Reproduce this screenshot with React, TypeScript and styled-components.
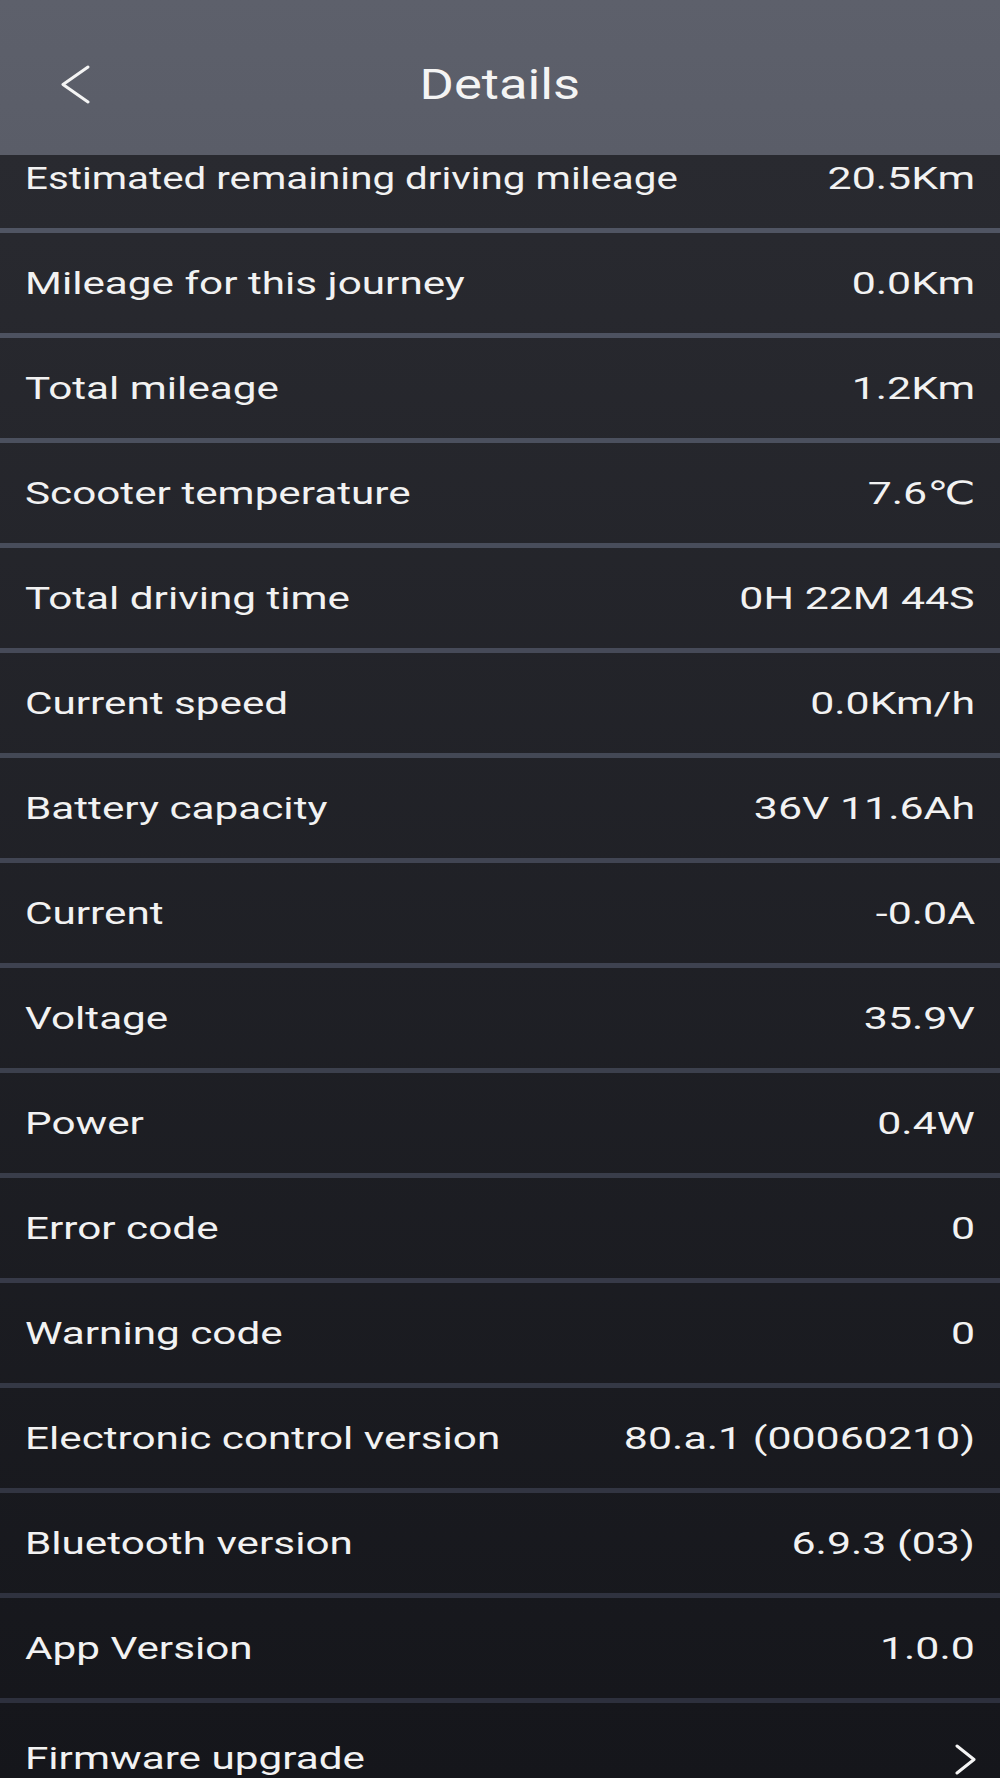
import React from 'react';
import styled, {createGlobalStyle} from 'styled-components';

const GlobalStyle = createGlobalStyle`
    html, body {
        margin: 0;
        padding: 0;
        background: #15161b;
    }
    body {
        font-family: Roboto, "DejaVu Sans", sans-serif;
        color: #f2f2f2;
    }
`;

interface DetailItem {
    label: string;
    value?: string;
    link?: boolean;
    /** long labels are squeezed a bit so they fit next to the value */
    tight?: boolean;
}

const items: DetailItem[] = [
    {label: 'Estimated remaining driving mileage', value: '20.5Km', tight: true},
    {label: 'Mileage for this journey', value: '0.0Km'},
    {label: 'Total mileage', value: '1.2Km'},
    {label: 'Scooter temperature', value: '7.6℃'},
    {label: 'Total driving time', value: '0H 22M 44S'},
    {label: 'Current speed', value: '0.0Km/h'},
    {label: 'Battery capacity', value: '36V 11.6Ah'},
    {label: 'Current', value: '-0.0A'},
    {label: 'Voltage', value: '35.9V'},
    {label: 'Power', value: '0.4W'},
    {label: 'Error code', value: '0'},
    {label: 'Warning code', value: '0'},
    {label: 'Electronic control version', value: '80.a.1 (00060210)'},
    {label: 'Bluetooth version', value: '6.9.3 (03)'},
    {label: 'App Version', value: '1.0.0'},
    {label: 'Firmware upgrade', link: true},
];

const Screen = styled.div`
    width: 1000px;
    height: 1778px;
    display: flex;
    flex-direction: column;
    overflow: hidden;
`;

const Header = styled.header`
    flex: 0 0 155px;
    box-sizing: border-box;
    padding-top: 14px;
    display: grid;
    grid-template-columns: 1fr auto 1fr;
    align-items: center;
    background: linear-gradient(#5d606b, #5a5d68);
    position: relative;
    z-index: 1;
`;

const BackButton = styled.button`
    justify-self: start;
    margin-left: 61px;
    padding: 0;
    border: 0;
    background: none;
    display: flex;
    cursor: pointer;
`;

const Title = styled.h1`
    margin: 0;
    font-size: 43px;
    font-weight: 400;
    line-height: 1;
    transform: scaleX(1.22);
    color: #f4f4f4;
`;

const Viewport = styled.main`
    flex: 1;
    overflow: hidden;
    background: linear-gradient(#292a30, #15161b);
`;

// the list is scrolled a little, so the first row sits partly under the header
const List = styled.ul`
    list-style: none;
    margin: -27px 0 0;
    padding: 0;
`;

const mix = (a: number[], b: number[], t: number) =>
    `rgb(${a.map((v, i) => Math.round(v + (b[i] - v) * t)).join(',')})`;

const Row = styled.li<{$t: number}>`
    height: 100px;
    box-sizing: content-box;
    border-bottom: 5px solid ${({$t}) => mix([80, 85, 99], [42, 45, 58], $t)};
    padding: 0 25px;
    display: flex;
    align-items: center;
    justify-content: space-between;

    &:last-child {
        padding-top: 5px;
    }
`;

const Label = styled.span<{$tight?: boolean}>`
    display: inline-block;
    font-size: 32px;
    white-space: nowrap;
    transform: scaleX(${({$tight}) => ($tight ? 1.26 : 1.32)});
    transform-origin: left center;
`;

const Value = styled.span`
    display: inline-block;
    font-size: 32px;
    white-space: nowrap;
    transform: scaleX(1.34);
    transform-origin: right center;
`;

const Chevron = ({dir}: {dir: 'left' | 'right'}) =>
    dir === 'left' ? (
        <svg width="30" height="40" viewBox="0 0 30 40" fill="none">
            <polyline points="27,2 2,19.5 27,37" stroke="#f4f4f4" strokeWidth="3" strokeLinecap="round" strokeLinejoin="round" />
        </svg>
    ) : (
        <svg width="22" height="32" viewBox="0 0 22 32" fill="none">
            <polyline points="2,2 19,15.5 2,29" stroke="#f4f4f4" strokeWidth="3" strokeLinecap="round" strokeLinejoin="round" />
        </svg>
    );

const LinkIcon = styled.span`
    display: flex;
    margin-right: -2px;
    margin-top: 4px;
`;

export default function App() {
    return (
        <>
            <GlobalStyle />
            <Screen>
                <Header>
                    <BackButton aria-label="Back">
                        <Chevron dir="left" />
                    </BackButton>
                    <Title>Details</Title>
                    <span />
                </Header>
                <Viewport>
                    <List>
                        {items.map((item, i) => (
                            <Row key={item.label} $t={i / (items.length - 1)}>
                                <Label $tight={item.tight}>{item.label}</Label>
                                {item.link ? (
                                    <LinkIcon>
                                        <Chevron dir="right" />
                                    </LinkIcon>
                                ) : (
                                    <Value>{item.value}</Value>
                                )}
                            </Row>
                        ))}
                    </List>
                </Viewport>
            </Screen>
        </>
    );
}
